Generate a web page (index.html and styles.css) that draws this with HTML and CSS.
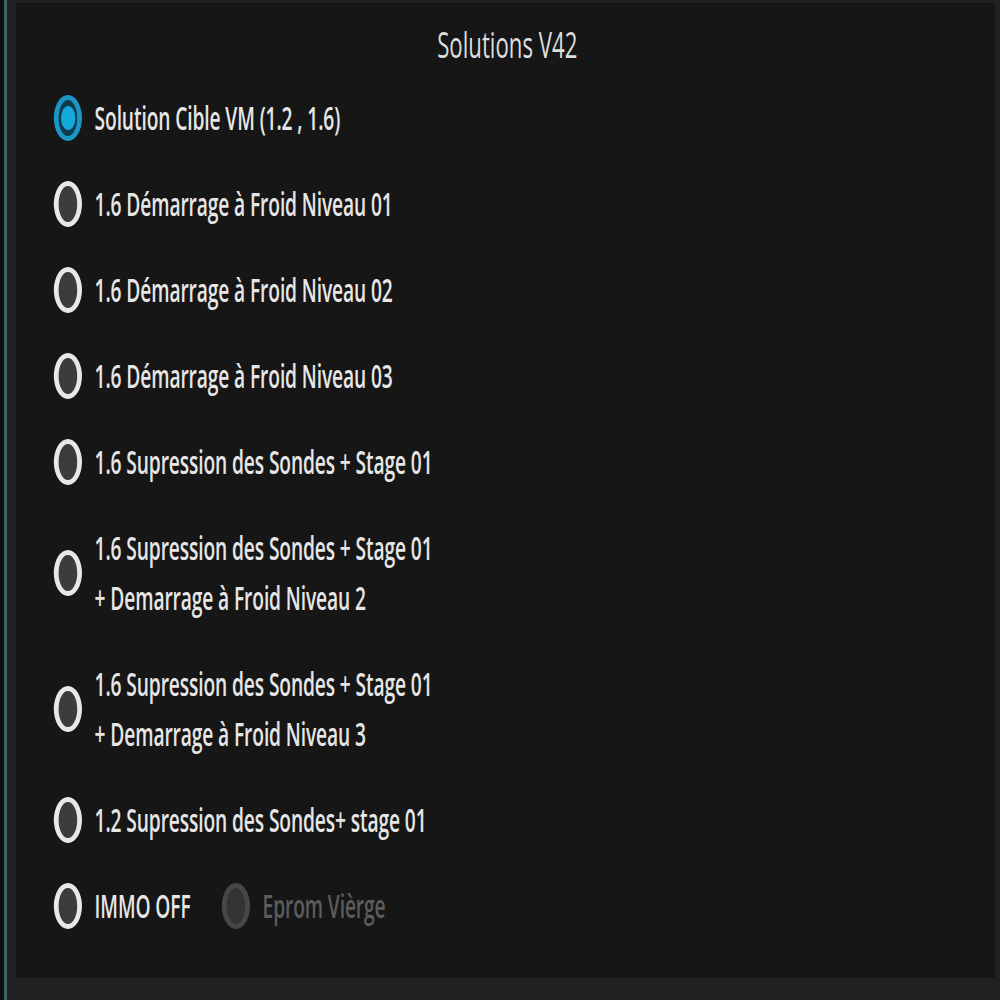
FILE: index.html
```html
<!DOCTYPE html>
<html lang="fr">
<head>
    <meta charset="UTF-8">
    <meta name="viewport" content="width=device-width, initial-scale=1.0">
    <title>Solutions V42</title>
    <link rel="stylesheet" href="styles.css">
</head>
<body>
    <div class="frame-edge"></div>
    <div class="frame-accent"></div>
    <div class="frame-gutter"></div>
    <div class="panel">
        <div class="panel-content">
            <div class="panel-title">Solutions V42</div>
            <div class="options">
                <div class="option">
                    <span class="radio checked"></span>
                    <span class="label">Solution Cible VM (1.2 , 1.6)</span>
                </div>
                <div class="option">
                    <span class="radio"></span>
                    <span class="label">1.6 Démarrage à Froid Niveau 01</span>
                </div>
                <div class="option">
                    <span class="radio"></span>
                    <span class="label">1.6 Démarrage à Froid Niveau 02</span>
                </div>
                <div class="option">
                    <span class="radio"></span>
                    <span class="label">1.6 Démarrage à Froid Niveau 03</span>
                </div>
                <div class="option">
                    <span class="radio"></span>
                    <span class="label">1.6 Supression des Sondes + Stage 01</span>
                </div>
                <div class="option">
                    <span class="radio"></span>
                    <span class="label">1.6 Supression des Sondes + Stage 01<br>+ Demarrage à Froid Niveau 2</span>
                </div>
                <div class="option">
                    <span class="radio"></span>
                    <span class="label">1.6 Supression des Sondes + Stage 01<br>+ Demarrage à Froid Niveau 3</span>
                </div>
                <div class="option">
                    <span class="radio"></span>
                    <span class="label">1.2 Supression des Sondes+ stage 01</span>
                </div>
                <div class="option-row">
                    <div class="option">
                        <span class="radio"></span>
                        <span class="label">IMMO OFF</span>
                    </div>
                    <div class="option disabled">
                        <span class="radio"></span>
                        <span class="label">Eprom Vièrge</span>
                    </div>
                </div>
            </div>
        </div>
    </div>
</body>
</html>
```

FILE: styles.css
```css
/* General Styles */
body {
    margin: 0;
    padding: 0;
    width: 1000px;
    height: 1000px;
    display: flex;
    background: #212121;
    font-family: 'Open Sans', 'Noto Sans', sans-serif;
    color: #e6e6e6;
    overflow: hidden;
}

/* Window frame on the left */
.frame-edge {
    width: 4px;
    background: #0e0e0e;
}

.frame-accent {
    width: 3px;
    background: #3e6464;
}

.frame-gutter {
    width: 9px;
    background: #222222;
}

/* Main panel */
.panel {
    flex: 1;
    margin: 3px 5px 22px 0;
    background: #161616;
    overflow: hidden;
}

/* The source is squeezed horizontally, so the content is drawn wide and scaled */
.panel-content {
    width: 166.667%;
    transform: scaleX(0.6);
    transform-origin: left top;
    padding-top: 16px;
}

.panel-title {
    text-align: center;
    font-size: 37px;
    line-height: 50px;
    color: #dedede;
    padding-left: 6px;
}

.options {
    display: flex;
    flex-direction: column;
    gap: 36px;
    padding: 24px 0 0 63px;
}

.option-row {
    display: flex;
    align-items: center;
    gap: 52px;
}

.option {
    display: flex;
    align-items: center;
    gap: 21px;
}

.label {
    font-size: 32px;
    font-weight: 600;
    line-height: 50px;
    white-space: nowrap;
    letter-spacing: -0.2px;
}

/* Radio buttons */
.radio {
    box-sizing: border-box;
    width: 47px;
    height: 46px;
    border-radius: 50%;
    border-style: solid;
    border-width: 5px 8px;
    border-color: #e8e8e8;
    background: #3c3c3c;
    flex-shrink: 0;
    display: flex;
    align-items: center;
    justify-content: center;
}

.radio.checked {
    border-color: #1a97c4;
    background: #0e3c4e;
}

.radio.checked::after {
    content: "";
    width: 24px;
    height: 24px;
    border-radius: 50%;
    background: #13a9dc;
}

.option.disabled .radio {
    border-color: #474747;
    background: #343434;
}

.option.disabled .label {
    color: #5c5c5c;
}
```
